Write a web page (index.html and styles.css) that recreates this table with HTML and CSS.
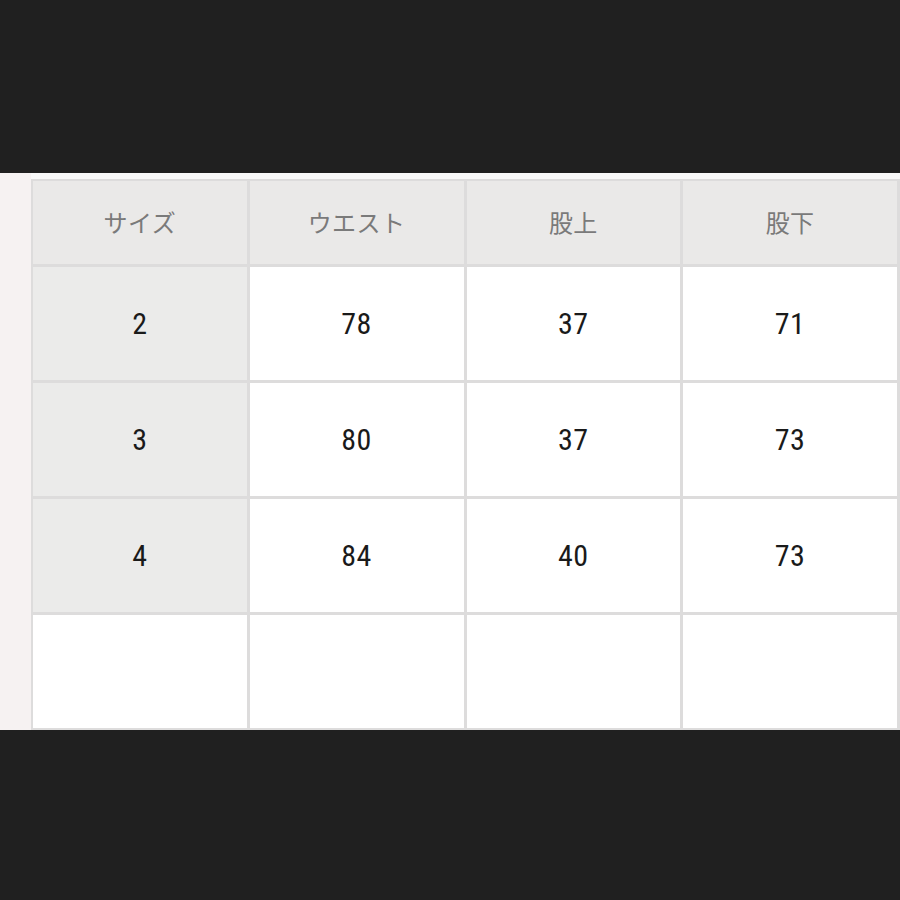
FILE: index.html
```
<!DOCTYPE html>
<html lang="ja">
<head>
<meta charset="utf-8">
<link rel="stylesheet" href="styles.css">
</head>
<body>
<div class="top"></div>
<div class="panel">
  <div class="grid">
    <div class="cell head">サイズ</div>
    <div class="cell head">ウエスト</div>
    <div class="cell head">股上</div>
    <div class="cell head">股下</div>

    <div class="cell size num">2</div>
    <div class="cell num">78</div>
    <div class="cell num">37</div>
    <div class="cell num">71</div>

    <div class="cell size num">3</div>
    <div class="cell num">80</div>
    <div class="cell num">37</div>
    <div class="cell num">73</div>

    <div class="cell size num">4</div>
    <div class="cell num">84</div>
    <div class="cell num">40</div>
    <div class="cell num">73</div>

    <div class="cell empty"></div>
    <div class="cell"></div>
    <div class="cell"></div>
    <div class="cell"></div>
  </div>
</div>
<div class="bottom"></div>
</body>
</html>
```
FILE: styles.css
```
html, body {
  margin: 0;
  padding: 0;
  background: #202020;
  width: 900px;
  height: 900px;
  overflow: hidden;
}
.top {
  height: 173px;
}
.panel {
  height: 557px;
  overflow: hidden;
  background: linear-gradient(to right, #f6f2f2 0, #f6f2f2 31px, #f9f9f9 31px);
  padding: 6px 0 0 31px;
  box-sizing: border-box;
}
.grid {
  display: grid;
  grid-template-columns: repeat(4, 1fr);
  grid-template-rows: 83px repeat(4, 113px);
  gap: 3px;
  padding: 2px 3px 2px 2px;
  background: #dddcdc;
  width: 869px;
  box-sizing: border-box;
}
.cell {
  background: #ffffff;
  display: flex;
  align-items: center;
  justify-content: center;
}
.head {
  background: #eae9e8;
  color: #7a7a7a;
  font-family: "Noto Sans CJK JP", "Noto Sans", sans-serif;
  font-size: 24px;
  letter-spacing: 0.5px;
  padding-bottom: 3px;
}
.size {
  background: #ebebea;
}
.num {
  color: #1a1a1a;
  font-family: "Liberation Sans Narrow", "Roboto", "Liberation Sans", sans-serif;
  font-size: 30px;
  font-stretch: condensed;
  letter-spacing: 0.5px;
}
```
